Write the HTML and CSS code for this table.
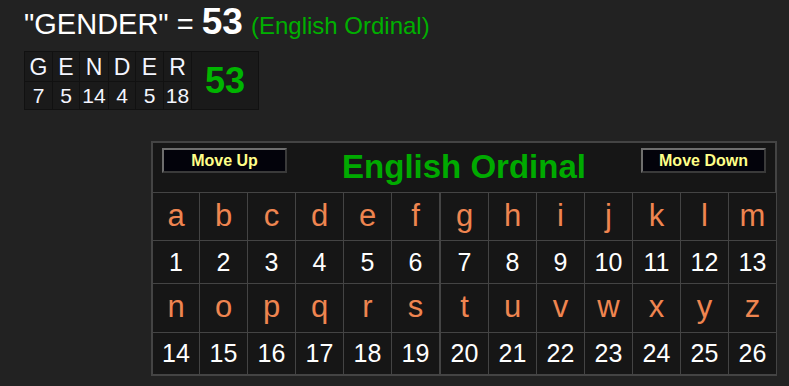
FILE: index.html
```html
<!DOCTYPE html>
<html>
<head>
<meta charset="utf-8">
<link rel="stylesheet" href="styles.css">
</head>
<body>
<div class="page">
  <div class="heading"><span class="word">"GENDER" = </span><b class="total">53</b> <span class="cipher">(English Ordinal)</span></div>
  <div class="breakdown">
    <div class="bcol w27"><span class="bl">G</span><span class="bn">7</span></div>
    <div class="bcol w26"><span class="bl">E</span><span class="bn">5</span></div>
    <div class="bcol w28"><span class="bl">N</span><span class="bn">14</span></div>
    <div class="bcol w26"><span class="bl">D</span><span class="bn">4</span></div>
    <div class="bcol w27"><span class="bl">E</span><span class="bn">5</span></div>
    <div class="bcol w27"><span class="bl">R</span><span class="bn">18</span></div>
    <div class="bsum">53</div>
  </div>
  <div class="chart">
    <div class="chart-head">
      <button class="btn">Move Up</button>
      <div class="title">English Ordinal</div>
      <button class="btn">Move Down</button>
    </div>
    <div class="grid">
      <div class="c l">a</div><div class="c l">b</div><div class="c l">c</div><div class="c l">d</div><div class="c l">e</div><div class="c l">f</div><div class="c l g">g</div><div class="c l">h</div><div class="c l">i</div><div class="c l">j</div><div class="c l">k</div><div class="c l">l</div><div class="c l">m</div>
      <div class="c n">1</div><div class="c n">2</div><div class="c n">3</div><div class="c n">4</div><div class="c n">5</div><div class="c n">6</div><div class="c n g">7</div><div class="c n">8</div><div class="c n">9</div><div class="c n">10</div><div class="c n">11</div><div class="c n">12</div><div class="c n">13</div>
      <div class="c l">n</div><div class="c l">o</div><div class="c l">p</div><div class="c l">q</div><div class="c l">r</div><div class="c l">s</div><div class="c l g">t</div><div class="c l">u</div><div class="c l">v</div><div class="c l">w</div><div class="c l">x</div><div class="c l">y</div><div class="c l">z</div>
      <div class="c n">14</div><div class="c n">15</div><div class="c n">16</div><div class="c n">17</div><div class="c n">18</div><div class="c n">19</div><div class="c n g">20</div><div class="c n">21</div><div class="c n">22</div><div class="c n">23</div><div class="c n">24</div><div class="c n">25</div><div class="c n">26</div>
    </div>
  </div>
</div>
</body>
</html>
```
FILE: styles.css
```css
html, body {
  margin: 0;
  padding: 0;
  background: #222222;
}
body {
  font-family: "Liberation Sans", Arial, sans-serif;
  color: #ffffff;
}
.page {
  padding: 5px 0 0 24px;
}
.heading {
  height: 46px;
  line-height: 34px;
  font-size: 29px;
  white-space: nowrap;
}
.word {
  color: #ffffff;
}
.total {
  font-size: 37px;
  font-weight: bold;
  color: #ffffff;
}
.cipher {
  font-size: 24px;
  color: #00b000;
}
.breakdown {
  display: inline-flex;
  background: #111111;
  border: 1px solid #111111;
  gap: 1px;
}
.bcol {
  display: flex;
  flex-direction: column;
  gap: 1px;
}
.w26 { width: 26px; }
.w27 { width: 27px; }
.w28 { width: 28px; }
.bl, .bn {
  display: block;
  background: #1a1a1a;
  text-align: center;
  color: #f4f6ff;
}
.bl {
  height: 29px;
  line-height: 31px;
  font-size: 23px;
}
.bn {
  height: 27px;
  line-height: 28px;
  font-size: 21px;
}
.bsum {
  width: 66px;
  background: #1a1a1a;
  color: #00b400;
  font-size: 36px;
  font-weight: bold;
  display: flex;
  align-items: center;
  justify-content: center;
}
.chart {
  margin: 31px 0 0 127px;
  width: 622px;
  border: 2px solid #444444;
  background: #161616;
}
.chart-head {
  height: 49px;
  display: flex;
  align-items: center;
  justify-content: space-between;
  padding: 0 9px 0 9px;
  border-bottom: 1px solid #444444;
}
.btn {
  align-self: flex-start;
  margin-top: 5px;
  width: 125px;
  height: 25px;
  padding: 0;
  background: #03030b;
  border: 2px solid;
  border-color: #6e6e6e #3a3a3a #3a3a3a #6e6e6e;
  color: #ffff88;
  font-family: "Liberation Sans", Arial, sans-serif;
  font-weight: bold;
  font-size: 16px;
  line-height: 20px;
}
.title {
  color: #00aa00;
  font-size: 33px;
  font-weight: bold;
  line-height: 36px;
  padding-bottom: 2px;
}
.grid {
  display: grid;
  grid-template-columns: 46px repeat(5, 47px) 48px repeat(6, 47px);
  grid-template-rows: 47px 42px 48px 41px;
  gap: 1px;
  background: #444444;
}
.c {
  background: #161616;
  display: flex;
  align-items: center;
  justify-content: center;
}
.c.g {
  border-left: 1px solid #444444;
}
.c.l {
  color: #ef8550;
  font-size: 31px;
  padding-bottom: 2px;
}
.c.n {
  color: #ffffff;
  font-size: 25px;
}
```
